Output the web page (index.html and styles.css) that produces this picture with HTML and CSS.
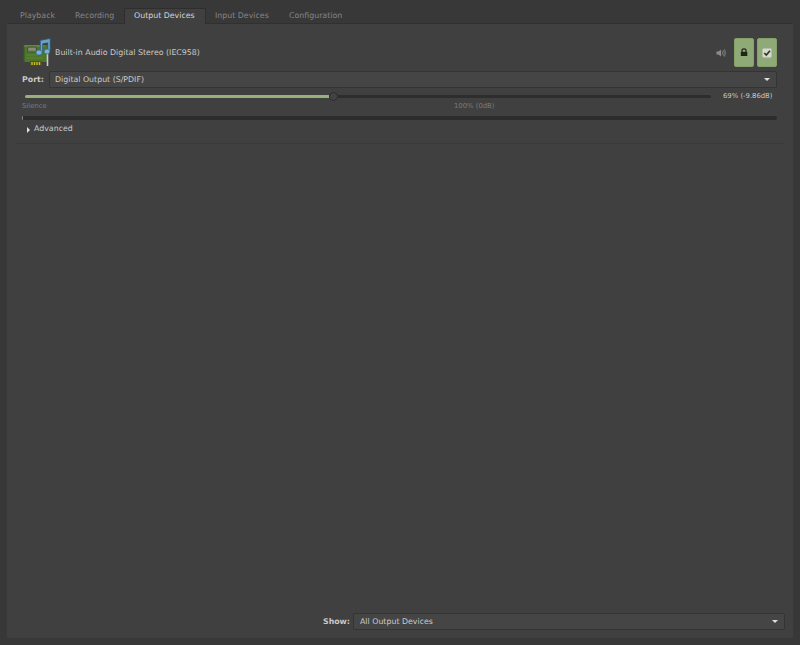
FILE: index.html
```html
<!DOCTYPE html>
<html lang="en">
<head>
<meta charset="utf-8">
<title>Volume Control</title>
<link rel="stylesheet" href="styles.css">
</head>
<body>
<nav class="tabs">
  <span class="tab playback">Playback</span>
  <span class="tab recording">Recording</span>
  <span class="tab active">Output Devices</span>
  <span class="tab input">Input Devices</span>
  <span class="tab config">Configuration</span>
</nav>
<main class="panel">
  <section class="device">
    <header class="device-head">
      <svg class="card-icon" viewBox="0 0 30 30" width="30" height="30">
        <path d="M2 7h24v17H2z" fill="#4c762b"/>
        <path d="M1 6h1.500v18H1z" fill="#385329"/>
        <path d="M2.500 7h20v2h-20z" fill="#648640"/>
        <path d="M4 20h17M4 17h12" stroke="#5d8436" stroke-width="1"/>
        <path d="M5.500 9h9v5h-9z" fill="#787f67" stroke="#41572f"/>
        <path d="M7 11h6" stroke="#989b87"/>
        <path d="M8 23h12v4.500H8z" fill="#594e16"/>
        <path d="M10 24v3M12.500 24v3M15 24v3M17.500 24v3" stroke="#c7bd2c" stroke-width="1.400"/>
        <path d="M25.500 12v16" stroke="#c9cec5" stroke-width="1.600"/>
        <path d="M19.500 14V3.500L27 2v11" fill="none" stroke="#315a73" stroke-width="3.400"/>
        <path d="M19.500 14V3.500L27 2v11" fill="none" stroke="#6ca3c3" stroke-width="1.600"/>
        <path d="M20 4.500l7-1.200" stroke="#6ca3c3" stroke-width="2"/>
        <ellipse cx="17" cy="14.500" rx="3" ry="2.600" fill="#78b2d4" stroke="#386885" stroke-width=".7"/>
        <ellipse cx="25" cy="13.500" rx="2.800" ry="2.500" fill="#78b2d4" stroke="#386885" stroke-width=".7"/>
      </svg>
      <span class="device-name">Built-in Audio Digital Stereo (IEC958)</span>
      <svg class="speaker" viewBox="0 0 12 10" width="12" height="10">
        <path d="M1.500 3.500h2L6 1.500v7L3.500 6.500h-2z" fill="#8c8c8c"/>
        <path d="M7 3q1.300 2 0 4M8.300 2q2 3 0 6M9.500 1.200q2.100 3.800 0 7.600" fill="none" stroke="#7a7a7a" stroke-width=".9"/>
      </svg>
      <span class="toggle lock">
        <svg viewBox="0 0 8 9" width="8" height="9"><path d="M2 4V2.500Q2 .8 4 .8T6 2.500V4" fill="none" stroke="#20251b" stroke-width="1.200"/><path d="M.8 3.800h6.500V8H.8z" fill="#20251b"/></svg>
      </span>
      <span class="toggle">
        <svg viewBox="0 0 10 10" width="10" height="10"><rect x=".5" y=".5" width="9" height="9" rx="1" fill="#d5d9d0"/><path d="M2.300 5l2 2L8 2.700" fill="none" stroke="#30342d" stroke-width="1.700"/></svg>
      </span>
    </header>
    <div class="port-row">
      <b class="port-label">Port:</b>
      <div class="select"><span class="port-value">Digital Output (S/PDIF)</span><i class="arrow"></i></div>
    </div>
    <div class="volume-row">
      <div class="slider"><i class="filled"></i><i class="knob"></i><i class="rest"></i></div>
      <span class="volume-value">69% (-9.86dB)</span>
    </div>
    <div class="scale"><span class="silence">Silence</span><span class="full">100% (0dB)</span></div>
    <div class="meter"></div>
    <div class="advanced"><i class="expander"></i><span class="adv-label">Advanced</span></div>
  </section>
  <footer class="show-row">
    <b class="show-label">Show:</b>
    <div class="select"><span class="show-value">All Output Devices</span><i class="arrow"></i></div>
  </footer>
</main>
</body>
</html>
```
FILE: styles.css
```css
* { box-sizing: border-box; }
body { margin: 0; width: 800px; height: 645px; padding: 8px 7px 7px; overflow: hidden; display: flex; flex-direction: column; background: #383838; color: #cacaca; font: 7.85px/12px "DejaVu Sans", sans-serif; white-space: nowrap; }
.tabs { display: flex; height: 15px; flex: none; padding-left: 2px; color: #858585; }
.tab { padding: 1px 0 0 10px; height: 15px; border: 1px solid transparent; border-bottom: 0; }
.playback { width: 55px; }
.recording { width: 60px; }
.active { width: 82px; height: 16px; z-index: 1; padding-left: 9px; border-color: #2e2e2e; border-radius: 2px 2px 0 0; background: #404040; color: #d4d4d4; }
.input { width: 73px; padding-left: 8px; }
.config { width: 72px; padding-left: 9px; }
.panel { flex: 1; display: flex; flex-direction: column; background: #404040; border-top: 1px solid #303030; padding: 14px 8px 8px; }
.device { height: 106px; flex: none; padding: 0 8px 0 7px; border-bottom: 1px solid #3a3a3a; }
.device-head { display: flex; align-items: center; height: 29px; }
.card-icon { flex: none; }
.device-name { margin-left: 3px; flex: 1; }
.speaker { margin-right: 7px; }
.toggle { width: 20px; height: 29px; display: grid; place-items: center; background: #90aa77; border: 1px solid #85a06b; border-radius: 2px; }
.toggle svg { display: block; }
.lock { margin-right: 3px; }
.port-row { display: flex; align-items: center; height: 17px; margin-top: 4px; }
.port-label { width: 27px; }
.select { flex: 1; height: 17px; display: flex; align-items: center; justify-content: space-between; padding: 0 6px 0 5px; background: #454545; border: 1px solid #343434; border-radius: 2px; }
.show-row .select { padding-left: 6px; }
.arrow { width: 6px; border: 3px solid transparent; border-top: 3px solid #e0e0e0; border-bottom: 0; }
.volume-row { display: flex; align-items: center; height: 12px; margin-top: 2px; }
.slider { width: 686px; margin-left: 3px; display: flex; align-items: center; }
.filled { width: 304px; height: 3px; background: #98b17c; border-radius: 2px 0 0 2px; }
.knob { width: 9px; height: 9px; border: 1px solid #2d2d2d; border-radius: 50%; background: #434343; }
.rest { flex: 1; height: 3px; background: #2d2d2d; border-radius: 0 2px 2px 0; }
.volume-value { margin-left: 12px; margin-top: -1px; font-size: 6.85px; }
.scale { display: flex; height: 10px; line-height: 10px; margin-top: -1px; font-size: 6.85px; color: #7c7c7c; }
.silence { width: 432px; }
.meter { height: 4px; margin-top: 5px; background: #2c2c2c; border-left: 1px solid #858585; border-radius: 1px 2px 2px 1px; }
.advanced { display: flex; align-items: center; height: 12px; margin-top: 3px; padding-left: 5px; }
.expander { height: 6px; border: 3px solid transparent; border-left: 3px solid #dedede; border-right: 0; margin-top: 2px; }
.adv-label { margin-left: 4px; }
.show-row { display: flex; align-items: center; height: 17px; margin-top: auto; padding-left: 308px; }
.show-label { width: 30px; }
```
